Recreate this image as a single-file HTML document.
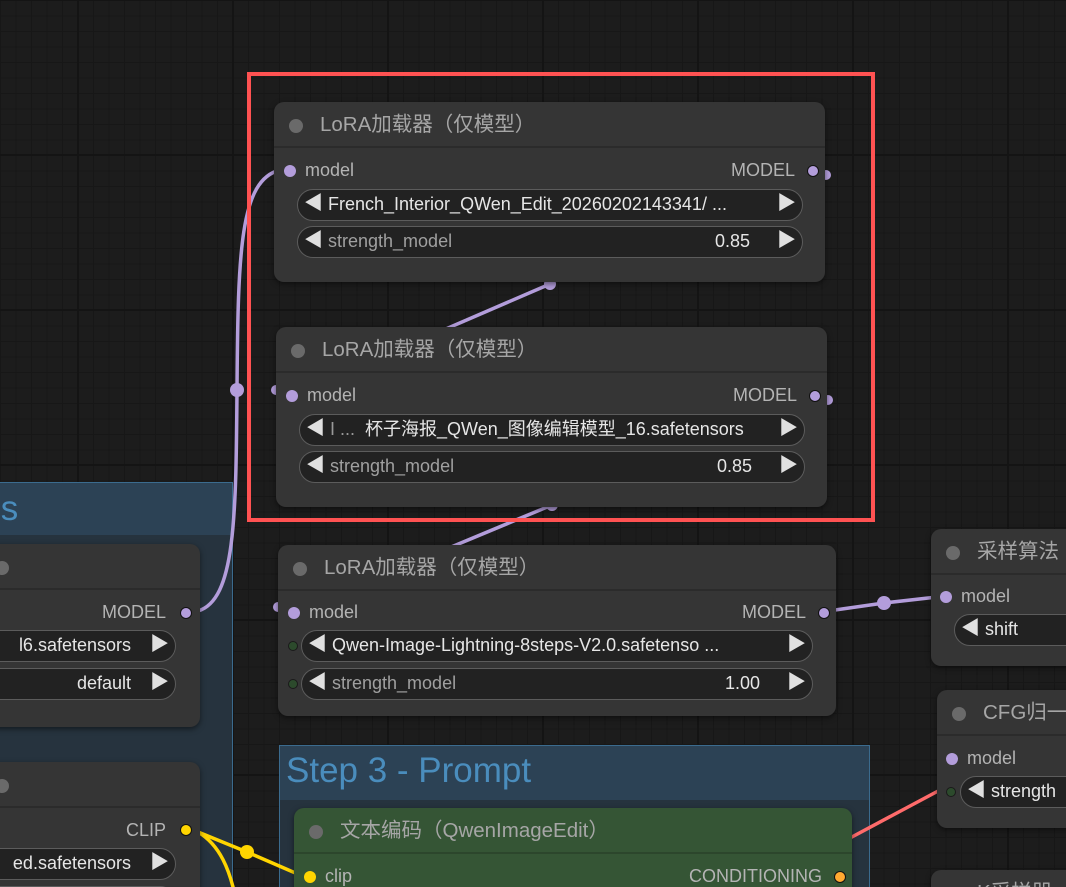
<!DOCTYPE html>
<html><head><meta charset="utf-8"><style>
*{box-sizing:border-box;margin:0;padding:0}
html,body{width:1066px;height:887px;overflow:hidden}
body{position:relative;background-color:#1c1c1c;
background-image:linear-gradient(#141414 2px,transparent 2px),linear-gradient(90deg,#141414 2px,transparent 2px),linear-gradient(#171717 1px,transparent 1px),linear-gradient(90deg,#171717 1px,transparent 1px);
background-size:155px 155px,155px 155px,15.5px 15.5px,15.5px 15.5px;background-position:0 -1px,77px 0,0 0,0 0;
font-family:"Liberation Sans","Noto Sans CJK SC",sans-serif;}
.abs{position:absolute}
.grp{position:absolute;border:1.5px solid #3b6b8e;background:#26333e}
.grp .gt{position:absolute;left:0;right:0;top:0;background:#2c4255;color:#4a8dbd;font-size:35px;padding-left:6px}
.node{position:absolute;background:#353535;border-radius:10px;box-shadow:0 2px 6px rgba(0,0,0,.5)}
.node .tb{height:46px;border-bottom:2px solid #2b2b2b;position:relative;color:#a6a6a6;font-size:20.5px;line-height:46px;padding-left:46px}
.node .tb:before{content:"";position:absolute;left:15px;top:17px;width:14px;height:14px;border-radius:50%;background:#6a6a6a}
.lbl{position:absolute;font-size:18px;color:#b4b4b4}
.dot{position:absolute;width:12px;height:12px;border-radius:50%;background:#b39ddb}
.dot.o{border:1.5px solid #111}
.w{position:absolute;height:32px;border:1.5px solid #5c5c5c;border-radius:16px;background:#222;color:#e6e6e6;font-size:18px;line-height:29px}
.w .l{position:absolute;left:6px;top:-1px;font-size:19px;color:#e0e0e0}
.w .r{position:absolute;right:6px;top:-1px;font-size:19px;color:#e0e0e0}
.w .t{position:absolute;left:30px;top:0;white-space:nowrap}
.w .t.g{color:#a0a0a0}
.w .v{position:absolute;right:52px;top:0}
.gd{position:absolute;width:10px;height:10px;border-radius:50%;border:1.5px solid #1a1a1a;background:#2c4a2c}
</style></head><body>

<div class="grp" style="left:-10px;top:482px;width:243px;height:420px"><div class="gt" style="height:52px;line-height:52px;padding-left:0">&nbsp;s</div></div>
<div class="grp" style="left:279px;top:745px;width:591px;height:160px"><div class="gt" style="height:54px;line-height:50px">Step 3 - Prompt</div></div>

<svg class="abs" style="left:0;top:0" width="1066" height="887">
<g fill="none" stroke-width="3.5" stroke-linecap="round">
<path d="M198,611 C235,600 236,520 237,390 C238,250 240,180 280,170" stroke="#b39ddb"/>
<path d="M550,284 L300,392" stroke="#b39ddb"/>
<path d="M552,505 L300,610" stroke="#b39ddb"/>
<path d="M828,611 L884,603 L946,596" stroke="#b39ddb"/>
<path d="M850,838 L940,790" stroke="#ff6b6b"/>
<path d="M198,832 L247,852 L300,875" stroke="#ffd500"/>
<path d="M198,832 C220,845 230,870 236,900" stroke="#ffd500"/>
</g>
<circle cx="237" cy="390" r="7" fill="#b39ddb"/>
<circle cx="884" cy="603" r="7" fill="#b39ddb"/>
<circle cx="247" cy="852" r="7" fill="#ffd500"/>
<circle cx="550" cy="284" r="6" fill="#b39ddb"/>
<circle cx="552" cy="505" r="6" fill="#b39ddb"/>
<circle cx="276" cy="390" r="5" fill="#b39ddb"/>
<circle cx="278" cy="607" r="5" fill="#b39ddb"/>
<circle cx="826" cy="175" r="5" fill="#b39ddb"/>
<circle cx="828" cy="400" r="5" fill="#b39ddb"/>
</svg>

<div class="node" style="left:-20px;top:544px;width:220px;height:183px">
 <div class="tb" style="padding:0"></div>
 <div class="lbl" style="right:34px;top:58px">MODEL</div>
 <div class="dot o" style="right:8px;top:63px"></div>
 <div class="w" style="left:-10px;top:86px;width:206px"><span class="v" style="right:44px">l6.safetensors</span><span class="r">▶</span></div>
 <div class="w" style="left:-10px;top:124px;width:206px"><span class="v" style="right:44px">default</span><span class="r">▶</span></div>
</div>
<div class="node" style="left:-20px;top:762px;width:220px;height:160px">
 <div class="tb" style="padding:0"></div>
 <div class="lbl" style="right:34px;top:58px">CLIP</div>
 <div class="dot o" style="right:8px;top:62px;background:#ffd500"></div>
 <div class="w" style="left:-10px;top:86px;width:206px"><span class="v" style="right:44px">ed.safetensors</span><span class="r">▶</span></div>
 <div class="w" style="left:-10px;top:124px;width:206px"></div>
</div>

<div class="node" style="left:274px;top:102px;width:551px;height:180px">
 <div class="tb">LoRA加载器（仅模型）</div>
 <div class="dot" style="left:10px;top:63px"></div><div class="lbl" style="left:31px;top:58px">model</div>
 <div class="lbl" style="right:30px;top:58px">MODEL</div><div class="dot o" style="right:6px;top:63px"></div>
 <div class="w" style="left:23px;top:87px;width:506px"><span class="l">◀</span><span class="t">French_Interior_QWen_Edit_20260202143341/ ...</span><span class="r">▶</span></div>
 <div class="w" style="left:23px;top:124px;width:506px"><span class="l">◀</span><span class="t g">strength_model</span><span class="v">0.85</span><span class="r">▶</span></div>
</div>
<div class="node" style="left:276px;top:327px;width:551px;height:180px">
 <div class="tb">LoRA加载器（仅模型）</div>
 <div class="dot" style="left:10px;top:63px"></div><div class="lbl" style="left:31px;top:58px">model</div>
 <div class="lbl" style="right:30px;top:58px">MODEL</div><div class="dot o" style="right:6px;top:63px"></div>
 <div class="w" style="left:23px;top:87px;width:506px"><span class="l">◀</span><span class="t"><span style="color:#999">I ... </span>&nbsp;杯子海报_QWen_图像编辑模型_16.safetensors</span><span class="r">▶</span></div>
 <div class="w" style="left:23px;top:124px;width:506px"><span class="l">◀</span><span class="t g">strength_model</span><span class="v">0.85</span><span class="r">▶</span></div>
</div>
<div class="node" style="left:278px;top:545px;width:558px;height:171px">
 <div class="tb">LoRA加载器（仅模型）</div>
 <div class="dot" style="left:10px;top:62px"></div><div class="lbl" style="left:31px;top:57px">model</div>
 <div class="lbl" style="right:30px;top:57px">MODEL</div><div class="dot o" style="right:6px;top:62px"></div>
 <div class="gd" style="left:10px;top:96px"></div>
 <div class="w" style="left:23px;top:85px;width:512px"><span class="l">◀</span><span class="t">Qwen-Image-Lightning-8steps-V2.0.safetenso ...</span><span class="r">▶</span></div>
 <div class="gd" style="left:10px;top:134px"></div>
 <div class="w" style="left:23px;top:123px;width:512px"><span class="l">◀</span><span class="t g">strength_model</span><span class="v">1.00</span><span class="r">▶</span></div>
</div>

<div class="node" style="left:294px;top:808px;width:558px;height:110px;background:#355535">
 <div class="tb" style="border-bottom-color:#2c462c">文本编码（QwenImageEdit）</div>
 <div class="dot" style="left:10px;top:63px;background:#ffd500"></div><div class="lbl" style="left:31px;top:58px">clip</div>
 <div class="lbl" style="right:30px;top:58px">CONDITIONING</div><div class="dot o" style="right:6px;top:63px;background:#ffa931"></div>
</div>

<div class="node" style="left:931px;top:529px;width:200px;height:137px">
 <div class="tb">采样算法</div>
 <div class="dot" style="left:9px;top:62px"></div><div class="lbl" style="left:30px;top:57px">model</div>
 <div class="w" style="left:23px;top:85px;width:200px"><span class="l">◀</span><span class="t">shift</span></div>
</div>
<div class="node" style="left:937px;top:690px;width:200px;height:138px">
 <div class="tb">CFG归一</div>
 <div class="dot" style="left:9px;top:63px"></div><div class="lbl" style="left:30px;top:58px">model</div>
 <div class="gd" style="left:9px;top:97px"></div>
 <div class="w" style="left:23px;top:86px;width:200px"><span class="l">◀</span><span class="t">strength</span></div>
</div>
<div class="node" style="left:931px;top:870px;width:200px;height:60px">
 <div class="tb">K采样器</div>
</div>

<div class="abs" style="left:247px;top:72px;width:628px;height:450px;border:4px solid #ff5252"></div>
</body></html>
